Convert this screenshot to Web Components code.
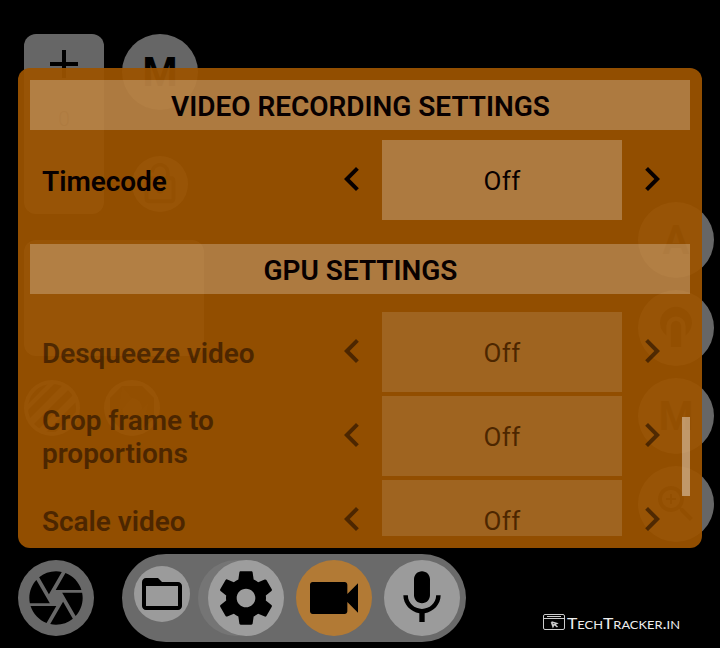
<!DOCTYPE html>
<html lang="en">
<head>
<meta charset="utf-8">
<title>Camera settings</title>
<style>
html,body{margin:0;background:#000;width:720px;height:648px;overflow:hidden;font-family:Roboto,"Liberation Sans",sans-serif}
</style>
</head>
<body>
<camera-app></camera-app>
<script>
const icons = {
  left: '<path d="M15.41 7.41L14 6l-6 6 6 6 1.41-1.41L10.83 12z"/>',
  right: '<path d="M10 6L8.59 7.41 13.17 12l-4.58 4.59L10 18l6-6z"/>',
  folder: '<path d="M20 6h-8l-2-2H4c-1.1 0-1.99.9-1.99 2L2 18c0 1.1.9 2 2 2h16c1.1 0 2-.9 2-2V8c0-1.1-.9-2-2-2zm0 12H4V8h16v10z"/>',
  gear: '<path d="M19.43 12.98c.04-.32.07-.64.07-.98s-.03-.66-.07-.98l2.11-1.65c.19-.15.24-.42.12-.64l-2-3.46c-.12-.22-.39-.3-.61-.22l-2.49 1c-.52-.4-1.08-.73-1.69-.98l-.38-2.65C14.46 2.18 14.25 2 14 2h-4c-.25 0-.46.18-.49.42l-.38 2.65c-.61.25-1.17.59-1.69.98l-2.49-1c-.23-.09-.49 0-.61.22l-2 3.46c-.13.22-.07.49.12.64l2.11 1.65c-.04.32-.07.65-.07.98s.03.66.07.98l-2.11 1.65c-.19.15-.24.42-.12.64l2 3.46c.12.22.39.3.61.22l2.49-1c.52.4 1.08.73 1.69.98l.38 2.65c.03.24.24.42.49.42h4c.25 0 .46-.18.49-.42l.38-2.65c.61-.25 1.17-.59 1.69-.98l2.49 1c.23.09.49 0 .61-.22l2-3.46c.12-.22.07-.49-.12-.64l-2.11-1.65zM12 15.5c-1.93 0-3.5-1.57-3.5-3.5s1.57-3.5 3.5-3.5 3.5 1.57 3.5 3.5-1.57 3.5-3.5 3.5z"/>',
  video: '<path d="M17 10.5V7c0-.55-.45-1-1-1H4c-.55 0-1 .45-1 1v10c0 .55.45 1 1 1h12c.55 0 1-.45 1-1v-3.5l4 4v-11l-4 4z"/>',
  mic: '<path d="M12 14c1.66 0 2.99-1.34 2.99-3L15 5c0-1.66-1.34-3-3-3S9 3.34 9 5v6c0 1.66 1.34 3 3 3zm5.3-3c0 3-2.54 5.1-5.3 5.1S6.7 14 6.7 11H5c0 3.41 2.72 6.23 6 6.72V21h2v-3.28c3.28-.48 6-3.3 6-6.72h-1.7z"/>',
  shutter: '<path d="M9.4 10.5l4.77-8.26C13.47 2.09 12.75 2 12 2c-2.4 0-4.6.85-6.32 2.25l3.66 6.35.06-.1zM21.54 9c-.92-2.92-3.15-5.26-6-6.34L11.88 9h9.66zm.26 1h-7.49l.29.5 4.76 8.25C21 16.97 22 14.61 22 12c0-.69-.07-1.35-.2-2zM8.54 12l-3.9-6.75C3.01 7.03 2 9.39 2 12c0 .69.07 1.35.2 2h7.49l-1.15-2zm-6.08 3c.92 2.92 3.15 5.26 6 6.34L12.12 15H2.46zm11.27 0l-3.9 6.76c.7.15 1.42.24 2.17.24 2.4 0 4.6-.85 6.32-2.25l-3.66-6.35-.93 1.6z"/>',
  zoom: '<path d="M15.5 14h-.79l-.28-.27C15.41 12.59 16 11.11 16 9.5 16 5.91 13.09 3 9.5 3S3 5.91 3 9.5 5.91 16 9.5 16c1.61 0 3.09-.59 4.23-1.57l.27.28v.79l5 4.99L20.49 19l-4.99-5zm-6 0C7.01 14 5 11.99 5 9.5S7.01 5 9.5 5 14 7.01 14 9.5 11.99 14 9.5 14zM12 10h-2v2H9v-2H7V9h2V7h1v2h2v1z"/>',
  lock: '<path d="M17.5 8H17V6c0-2.76-2.24-5-5-5S7 3.24 7 6h1.9c0-1.71 1.39-3.1 3.1-3.1 1.71 0 3.1 1.39 3.1 3.1v2H6c-1.1 0-2 .9-2 2v10c0 1.1.9 2 2 2h12c1.1 0 2-.9 2-2V10c0-1.1-.9-2-2-2zm.5 12H6V10h12v10z"/><circle cx="12" cy="15" r="1.9"/>',
  stabil: '<path d="M7.2 15.8A8 8 0 1 1 16.8 15.8V11a4.8 4.8 0 0 0-9.6 0z"/><path d="M9.4 21.5V11a2.6 2.6 0 0 1 5.2 0v10.5z"/>',
  plus: '<path d="M11 5h2v6h6v2h-6v6h-2v-6H5v-2h6z"/>'
};
class UiIcon extends HTMLElement {
  connectedCallback() {
    const s = this.getAttribute('size') || 48;
    this.attachShadow({mode:'open'}).innerHTML = `<style>:host{display:block;flex:none;width:${s}px;height:${s}px}svg{display:block}</style>
    <svg width="${s}" height="${s}" viewBox="0 0 24 24" fill="currentColor">${icons[this.getAttribute('name')]}</svg>`;
  }
}
customElements.define('ui-icon', UiIcon);

function define(name, html) {
  const t = document.createElement('template');
  t.innerHTML = html;
  customElements.define(name, class extends HTMLElement {
    constructor() { super(); this.attachShadow({mode:'open'}).append(t.content.cloneNode(true)); }
  });
}

define('round-button', `<style>
:host{display:flex;flex:none;box-sizing:border-box;align-items:center;justify-content:center;width:76px;height:76px;border-radius:50%;background:var(--disc,#666);font:700 40px/1 Roboto,sans-serif;color:var(--ink,#000)}
:host([small]){width:56px;height:56px}
</style><slot></slot>`);

define('left-controls', `<style>
:host{display:flex;flex-direction:column;padding:34px 0 0 24px}
.top{display:flex;gap:18px}
.card{width:80px;height:180px;border-radius:12px;background:#666;display:flex;flex-direction:column;align-items:center;box-sizing:border-box;padding-top:6px;font:300 21px/24px Roboto,sans-serif}
.card span{margin-top:19px;color:#111}
.col{display:flex;flex-direction:column;align-items:center;gap:46px}
.col round-button:first-child{line-height:42px;padding-top:2px}
.info{width:180px;height:116px;border-radius:12px;background:#666;margin-top:26px}
.tools{display:flex;gap:24px;margin-top:24px}
</style>
<div class="top"><div class="card"><ui-icon name="plus" size="48"></ui-icon><span>0</span></div>
<div class="col"><round-button>M</round-button><round-button small style="--ink:#222"><ui-icon name="lock" size="46"></ui-icon></round-button></div></div>
<div class="info"></div>
<div class="tools">
<round-button small><svg width="56" height="56"><defs><clipPath id="c"><circle cx="28" cy="28" r="24"/></clipPath></defs><g clip-path="url(#c)" stroke="#111" stroke-width="7"><path d="M-4 27L27-4M-3 42L42-3M5 54L54 5M20 59L59 20M35 64L64 35"/></g></svg></round-button>
<round-button small><svg width="56" height="56"><path fill="#111" d="M18 6h20l12 12v20L38 50H18L6 38V18z"/><circle cx="28" cy="28" r="10" fill="#383838"/><path d="M18 6l10 12L14 34zM38 50L28 38 45 22z" fill="#222"/></svg></round-button>
</div>`);

define('right-controls', `<style>
:host{display:flex;flex-direction:column;gap:12px;padding:202px 6px 0 0;justify-self:end;--ink:#1a1a1a}
.letter{padding-top:2px}
</style>
<round-button class="letter">A</round-button><round-button><ui-icon name="stabil"></ui-icon></round-button><round-button class="letter">M</round-button><round-button><ui-icon name="zoom"></ui-icon></round-button>`);

define('section-title', `<style>
:host{display:block;flex:none;height:50px;box-sizing:border-box;padding-left:1px;background:rgba(255,255,255,.25);text-align:center;font:600 28px/53px Roboto,sans-serif;letter-spacing:-.03px;color:#080000}
</style><slot></slot>`);

define('option-row', `<style>
:host{display:flex;flex:none;align-items:center;height:80px;padding:0 14px 0 12px;color:#080000}
:host([disabled]){opacity:.5}
.label{width:286px;font:600 28px/33px Roboto,sans-serif;padding-top:2px;letter-spacing:-.04px}
.value{width:240px;height:80px;margin:0 6px;background:rgba(255,255,255,.25);text-align:center;font:400 26px/82px Roboto,sans-serif;letter-spacing:.4px}
ui-icon{position:relative;top:-1px}
</style><div class="label"><slot></slot></div><ui-icon name="left"></ui-icon><div class="value"><slot name="value"></slot></div><ui-icon name="right"></ui-icon>`);

define('settings-panel', `<style>
:host{display:grid;box-sizing:border-box;width:684px;height:480px;margin:68px 0 0 18px;border-radius:12px;background:rgba(155,83,0,.94);padding:12px;overflow:hidden}
.list{grid-area:1/1;height:456px;overflow:hidden;display:flex;flex-direction:column}
.bar{grid-area:1/1;justify-self:end;width:8px;height:79px;margin-top:337px;background:rgba(255,255,255,.4)}
</style><div class="list"><slot></slot></div><div class="bar"></div>`);

define('mode-bar', `<style>
:host{display:flex;align-items:center;gap:28px;padding:554px 0 0 18px;align-self:start}
.pill{display:flex;align-items:center;gap:12px;height:88px;width:344px;box-sizing:border-box;padding:0 6px 0 12px;border-radius:44px;background:#6a6a6a;--disc:#9b9b9b}
.folder{margin:0 6px 8px 0}
.gear{background:#9d9d9d;box-shadow:-10px 0 0 #757575}
.video{--disc:#b27a35}
</style>
<round-button style="--disc:#686868"><ui-icon name="shutter" size="64"></ui-icon></round-button>
<div class="pill"><round-button small class="folder"><ui-icon name="folder"></ui-icon></round-button>
<round-button class="gear"><ui-icon name="gear" size="64"></ui-icon></round-button>
<round-button class="video"><ui-icon name="video" size="64"></ui-icon></round-button>
<round-button><ui-icon name="mic" size="64"></ui-icon></round-button></div>`);

define('site-mark', `<style>
:host{display:flex;justify-self:end;align-self:end;padding:0 39px 14px 0}
svg{display:block}
text{font:400 15px Lato,sans-serif;font-variant:small-caps;fill:#eee}
</style>
<svg width="139" height="22"><g fill="none" stroke="#ccc"><rect x="1.5" y="2.5" width="21" height="15" rx="1.5"/><path d="M2 6.5h20M5 4.5h14"/><path stroke-width="1.6" d="M9.5 10l5 1.5-2 1 3 2.5M9.5 10l1.5 4.5 1-2"/></g><text x="25" y="17" textLength="113" lengthAdjust="spacingAndGlyphs">TechTracker.in</text></svg>`);

define('camera-app', `<style>
:host{display:grid;width:720px;height:648px;background:#000;overflow:hidden}
:host>*{grid-area:1/1}
</style>
<left-controls></left-controls><right-controls></right-controls><mode-bar></mode-bar>
<settings-panel>
<section-title>VIDEO RECORDING SETTINGS</section-title>
<option-row style="margin-top:10px">Timecode<span slot="value">Off</span></option-row>
<section-title style="margin-top:24px">GPU SETTINGS</section-title>
<option-row disabled style="margin-top:18px">Desqueeze video<span slot="value">Off</span></option-row>
<option-row disabled style="margin-top:4px">Crop frame to<br>proportions<span slot="value">Off</span></option-row>
<option-row disabled style="margin-top:4px">Scale video<span slot="value">Off</span></option-row>
</settings-panel>
<site-mark></site-mark>`);
</script>
</body>
</html>
